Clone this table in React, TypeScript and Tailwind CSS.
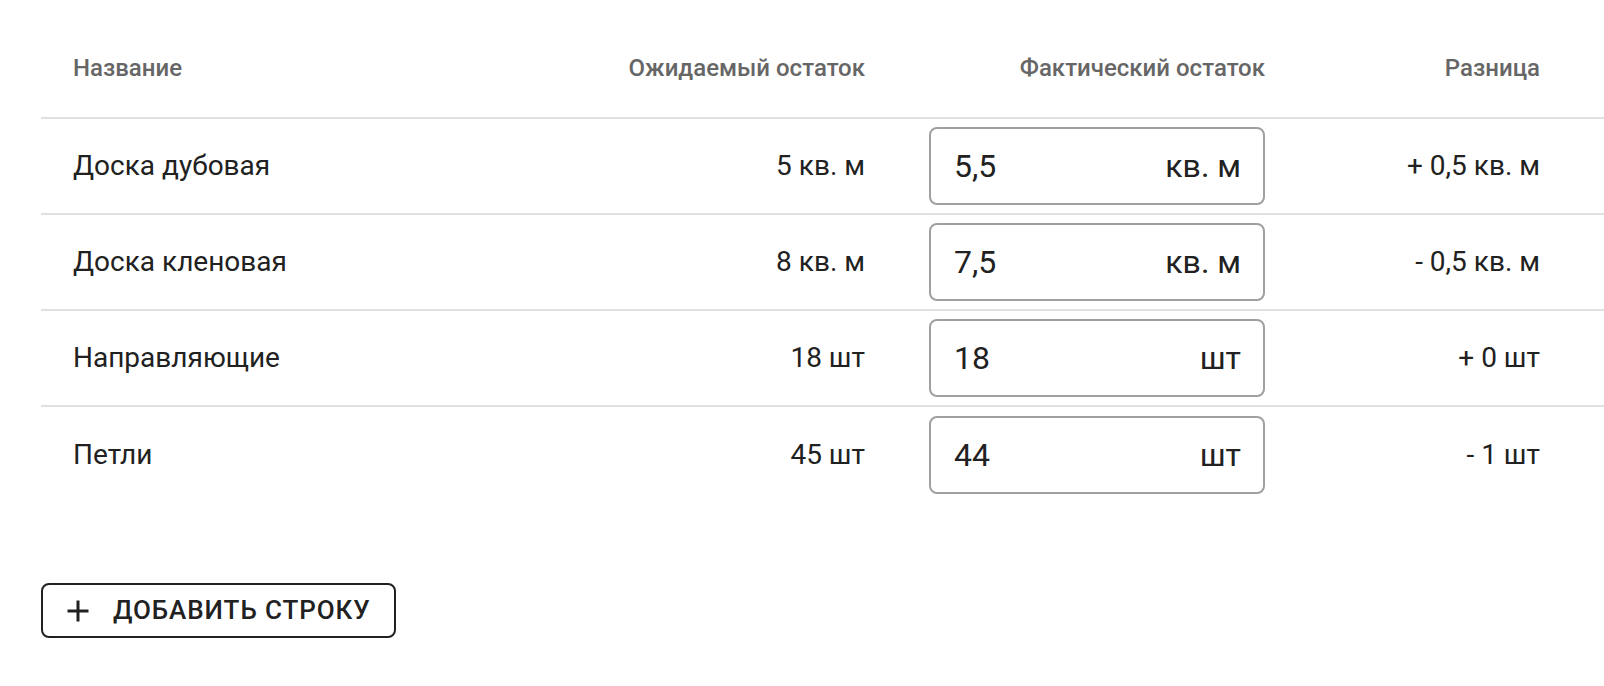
import React from "react";

type Row = { name: string; expected: string; actual: string; unit: string; diff: string };

const rows: Row[] = [
  { name: "Доска дубовая", expected: "5 кв. м", actual: "5,5", unit: "кв. м", diff: "+ 0,5 кв. м" },
  { name: "Доска кленовая", expected: "8 кв. м", actual: "7,5", unit: "кв. м", diff: "- 0,5 кв. м" },
  { name: "Направляющие", expected: "18 шт", actual: "18", unit: "шт", diff: "+ 0 шт" },
  { name: "Петли", expected: "45 шт", actual: "44", unit: "шт", diff: "- 1 шт" },
];

export default function App() {
  return (
    <div
      className="min-h-[686px] w-full bg-white pl-[41px] text-[#212121]"
      style={{ fontFamily: "Roboto, 'Noto Sans', sans-serif" }}
    >
      <div className="flex h-[119px] border-b-2 border-[#e0e0e0] pt-[44px] text-[24px] font-medium leading-[48px] text-[#666666]">
        <div className="w-[480px] shrink-0 pl-[32px]">Название</div>
        <div className="w-[376px] shrink-0 pr-[32px] text-right">Ожидаемый остаток</div>
        <div className="w-[400px] shrink-0 pr-[32px] text-right">Фактический остаток</div>
        <div className="w-[275px] shrink-0 pr-[32px] text-right">Разница</div>
      </div>
      {rows.map((r, i) => (
        <div
          key={r.name}
          className={
            "flex h-[96px] items-center text-[28px] leading-[40px] " +
            (i < rows.length - 1 ? "border-b-2 border-[#e0e0e0]" : "")
          }
        >
          <div className="w-[480px] shrink-0 pl-[32px]">{r.name}</div>
          <div className="w-[376px] shrink-0 pr-[32px] text-right">{r.expected}</div>
          <div className="w-[400px] shrink-0 px-[32px]">
            <div className="flex h-[78px] w-[336px] items-center justify-between rounded-[8px] border-2 border-[#a0a0a0] pl-[23px] pr-[22px] text-[32px] leading-[40px]">
              <span>{r.actual}</span>
              <span>{r.unit}</span>
            </div>
          </div>
          <div className="w-[275px] shrink-0 pr-[32px] text-right">{r.diff}</div>
        </div>
      ))}
      <div className="mt-[80px]">
        <button className="flex h-[55px] w-[355px] items-center gap-[17px] rounded-[8px] border-2 border-[#212121] pl-[17px] text-[26px] font-medium uppercase tracking-[0.9px] text-[#212121]">
          <svg width="36" height="36" viewBox="0 0 24 24" fill="currentColor">
            <path d="M19 13h-6v6h-2v-6H5v-2h6V5h2v6h6v2z" />
          </svg>
          <span>Добавить строку</span>
        </button>
      </div>
    </div>
  );
}
